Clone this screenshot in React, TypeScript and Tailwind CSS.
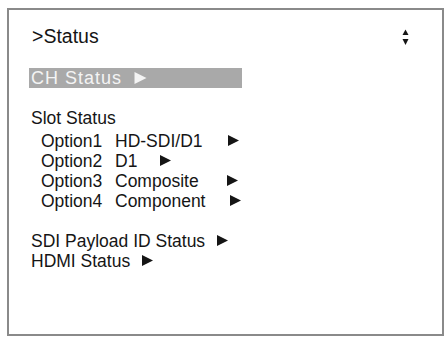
import React from 'react';

const font = { fontFamily: '"Liberation Sans", Arial, sans-serif' };

function Tri({ className = '' }: { className?: string }) {
  return (
    <svg width="11" height="11" viewBox="0 0 11 11" className={className}>
      <path d="M0 0 L11 5.5 L0 11 Z" fill="currentColor" />
    </svg>
  );
}

function UpDown() {
  return (
    <svg width="7" height="17" viewBox="0 0 7 17" className="text-[#151515]">
      <path d="M3.5 0.5 L6.5 6 L0.5 6 Z" fill="currentColor" />
      <path d="M0.5 10 L6.5 10 L3.5 16 Z" fill="currentColor" />
    </svg>
  );
}

const options = [
  { label: 'Option1', value: 'HD-SDI/D1', w: 'w-[113px]' },
  { label: 'Option2', value: 'D1', w: 'w-[45px]' },
  { label: 'Option3', value: 'Composite', w: 'w-[112px]' },
  { label: 'Option4', value: 'Component', w: 'w-[115px]' },
];

export default function App() {
  return (
    <div className="w-[446px] h-[337px] bg-white pt-[8px] pl-[7px]" style={font}>
      <div className="w-[437px] h-[328px] border-2 border-[#8a8a8a] pl-[20px] pt-[14px] text-[#151515]">
        {/* title row */}
        <div className="flex items-start justify-between pr-[33px]">
          <span className="ml-[3px] text-[19.5px] leading-[24px]">&gt;Status</span>
          <span className="mt-[5px]">
            <UpDown />
          </span>
        </div>

        {/* selected item */}
        <div className="mt-[20px] flex h-[20px] w-[213px] items-center bg-[#a9a9a9] pl-[2px] text-[#f4f4f4]">
          <span className="text-[18px] leading-[20px] tracking-[1px]">CH Status</span>
          <Tri className="ml-[12px] h-[12px] w-[13px]" />
        </div>

        <div className="mt-[20px] ml-[2px] text-[17.5px] leading-[20px]">
          <div>Slot Status</div>
          <div className="mt-[3px] ml-[10px]">
            {options.map((o) => (
              <div key={o.label} className="flex items-center h-[20px]">
                <span className="w-[74px]">{o.label}</span>
                <span className={o.w}>{o.value}</span>
                <Tri className="mt-[-2px]" />
              </div>
            ))}
          </div>

          <div className="mt-[20px] flex items-center h-[20px]">
            <span>SDI Payload ID Status</span>
            <Tri className="ml-[12px] mt-[-2px]" />
          </div>
          <div className="flex items-center h-[20px]">
            <span>HDMI Status</span>
            <Tri className="ml-[12px] mt-[-2px]" />
          </div>
        </div>
      </div>
    </div>
  );
}
